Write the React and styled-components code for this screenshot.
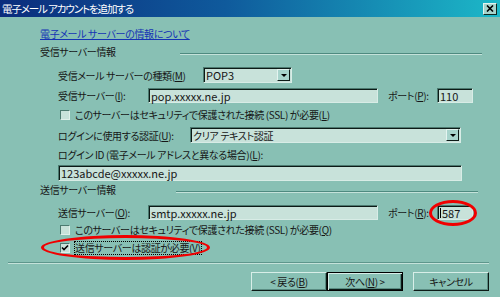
import styled, { createGlobalStyle } from "styled-components";

const GlobalStyle = createGlobalStyle`
  html, body {
    margin: 0;
    padding: 0;
    background: #88c0b4;
  }
`;

const Window = styled.div`
  width: 500px;
  height: 297px;
  overflow: hidden;
  background: #88c0b4;
  display: flex;
  flex-direction: column;
  font-family: "Noto Sans CJK JP", "Noto Sans", sans-serif;
  font-feature-settings: "palt";
  font-size: 10px;
  letter-spacing: -0.35px;
  color: #161616;
`;

const TitleBar = styled.div`
  height: 17px;
  flex-shrink: 0;
  display: flex;
  align-items: center;
  justify-content: space-between;
  padding: 0 3px 0 2px;
  background: linear-gradient(to right, #0b2c7c 0%, #0f5a9c 45%, #1cb8c8 100%);
  color: #fff;
  font-size: 10.5px;
  letter-spacing: -1.1px;
`;

const CloseButton = styled.div`
  width: 14px;
  height: 12px;
  box-sizing: border-box;
  display: flex;
  align-items: center;
  justify-content: center;
  background: #a8d4cc;
  border-top: 1px solid #e4f4f0;
  border-left: 1px solid #e4f4f0;
  border-right: 1px solid #102820;
  border-bottom: 1px solid #102820;
`;

const Body = styled.div`
  display: flex;
  flex-direction: column;
  padding: 9px 0 0 40px;
`;

const Row = styled.div`
  display: flex;
  align-items: center;
  height: ${(p) => p.$h || 14}px;
  margin-top: ${(p) => p.$mt || 0}px;
  padding-left: ${(p) => p.$indent || 0}px;
  white-space: nowrap;
`;

const Link = styled.a`
  color: #1434b4;
  text-decoration: underline;
`;

const Heading = styled(Row)`
  align-items: flex-start;
  line-height: 14px;
  padding-right: ${(p) => p.$pr}px;
`;

const Rule = styled.div`
  margin-left: auto;
  margin-top: 8px;
  width: 302px;
  height: 0;
  border-top: 1px solid #4e8a80;
  border-bottom: 1px solid #c4e2da;
`;

const Label = styled.span`
  display: inline-block;
  width: ${(p) => (p.$w ? `${p.$w}px` : "auto")};
  margin-left: ${(p) => p.$ml || 0}px;
  flex-shrink: 0;
`;

const U = styled.span`
  text-decoration: underline;
`;

const Field = styled.div`
  position: relative;
  width: ${(p) => p.$w}px;
  height: ${(p) => p.$h || 15}px;
  box-sizing: border-box;
  background: #c8e2da;
  border-top: 1px solid #4c7a70;
  border-left: 1px solid #4c7a70;
  border-right: 1px solid #d8ece6;
  border-bottom: 1px solid #d8ece6;
  box-shadow: inset 1px 1px 0 #0c1a16;
  padding-left: 2px;
  display: flex;
  align-items: center;
  flex-shrink: 0;
  font-size: ${(p) => (p.$jp ? 10 : 11)}px;
  letter-spacing: ${(p) => (p.$jp ? -0.35 : 0)}px;
`;

const Caret = styled.span`
  width: 1px;
  height: 10px;
  background: #000;
  margin-right: 1px;
`;

const DropButton = styled.div`
  margin-left: auto;
  width: 13px;
  height: 12px;
  box-sizing: border-box;
  background: #a8d4cc;
  border-top: 1px solid #e4f4f0;
  border-left: 1px solid #e4f4f0;
  border-right: 1px solid #0c1a16;
  border-bottom: 1px solid #0c1a16;
  display: flex;
  align-items: center;
  justify-content: center;
  margin-right: 1px;

  &::after {
    content: "";
    border-left: 3px solid transparent;
    border-right: 3px solid transparent;
    border-top: 3px solid #000;
  }
`;

const Box = styled.span`
  position: relative;
  width: 10px;
  height: 10px;
  box-sizing: border-box;
  background: #c8e2da;
  border-top: 1px solid #4c7a70;
  border-left: 1px solid #4c7a70;
  border-right: 1px solid #e0f0ea;
  border-bottom: 1px solid #e0f0ea;
  margin: 0 5px 0 2px;
  flex-shrink: 0;
  display: flex;
  align-items: center;
  justify-content: center;
`;

const Focus = styled.span`
  outline: 1px dotted #000;
  outline-offset: 0;
  line-height: 12px;
`;

const Ring = styled.span`
  position: absolute;
  left: ${(p) => p.$x}px;
  top: ${(p) => p.$y}px;
  width: ${(p) => p.$w}px;
  height: ${(p) => p.$h}px;
  box-sizing: border-box;
  border: 3px solid #f00000;
  border-radius: 50%;
  pointer-events: none;
`;

const Anchor = styled.div`
  position: relative;
  display: flex;
  align-items: center;
`;

const Footer = styled.div`
  display: flex;
  flex-direction: column;
  padding: 0 11px 0 8px;
  margin-top: 8px;
`;

const Separator = styled.div`
  height: 0;
  border-top: 1px solid #5e968c;
  border-bottom: 1px solid #c4e2da;
`;

const Buttons = styled.div`
  display: flex;
  justify-content: flex-end;
  margin-top: 8px;
`;

const Button = styled.div`
  width: 76px;
  height: 19px;
  box-sizing: border-box;
  display: flex;
  align-items: center;
  justify-content: center;
  background: #88c0b4;
  border-top: 1px solid #d8eee8;
  border-left: 1px solid #d8eee8;
  border-right: 1px solid #0c1a16;
  border-bottom: 1px solid #0c1a16;
  box-shadow: inset -1px -1px 0 #5a8c82;
  margin-left: ${(p) => p.$ml || 0}px;
  ${(p) =>
    p.$default &&
    `
    border: 1px solid #000;
    box-shadow: inset 1px 1px 0 #d8eee8, inset -1px -1px 0 #0c1a16, inset -2px -2px 0 #5a8c82;
  `}
`;

const CheckMark = () => (
  <svg width="8" height="8" viewBox="0 0 8 8">
    <path d="M1 3.5 L3 5.5 L7 1.5" stroke="#000" strokeWidth="1.6" fill="none" />
  </svg>
);

const Checkbox = ({ checked }) => <Box>{checked && <CheckMark />}</Box>;

export default function App() {
  return (
    <>
      <GlobalStyle />
      <Window>
        <TitleBar>
          <span>電子メール アカウントを追加する</span>
          <CloseButton>
            <svg width="8" height="7" viewBox="0 0 8 7">
              <path d="M1 0.5 L7 6.5 M7 0.5 L1 6.5" stroke="#000" strokeWidth="1.6" />
            </svg>
          </CloseButton>
        </TitleBar>
        <Body>
          <Row>
            <Link>電子メール サーバーの情報について</Link>
          </Row>

          <Heading $mt={5} $pr={18}>
            <span>受信サーバー情報</span>
            <Rule />
          </Heading>

          <Row $mt={8} $h={16} $indent={18}>
            <Label $w={145}>
              受信メール サーバーの種類(<U>M</U>)
            </Label>
            <Field $w={89} $h={16}>
              POP3
              <DropButton />
            </Field>
          </Row>

          <Row $mt={5} $h={15} $indent={18}>
            <Label $w={90}>
              受信サーバー(<U>I</U>):
            </Label>
            <Field $w={230}>pop.xxxxx.ne.jp</Field>
            <Label $ml={10} $w={49}>
              ポート(<U>P</U>):
            </Label>
            <Field $w={36}>110</Field>
          </Row>

          <Row $mt={5} $h={13} $indent={18}>
            <Checkbox />
            <span>
              このサーバーはセキュリティで保護された接続 (SSL) が必要(<U>L</U>)
            </span>
          </Row>

          <Row $mt={6} $h={16} $indent={18}>
            <Label $w={132}>
              ログインに使用する認証(<U>U</U>):
            </Label>
            <Field $w={271} $h={16} $jp>
              クリア テキスト認証
              <DropButton />
            </Field>
          </Row>

          <Row $mt={4} $indent={18}>
            ログイン ID (電子メール アドレスと異なる場合)(<U>L</U>):
          </Row>

          <Row $mt={4} $h={16} $indent={18}>
            <Field $w={404} $h={16}>
              123abcde@xxxxx.ne.jp
            </Field>
          </Row>

          <Heading $mt={2} $pr={22}>
            <span>送信サーバー情報</span>
            <Rule />
          </Heading>

          <Row $mt={8} $h={15} $indent={18}>
            <Label $w={90}>
              送信サーバー(<U>O</U>):
            </Label>
            <Field $w={230}>smtp.xxxxx.ne.jp</Field>
            <Label $ml={10} $w={49}>
              ポート(<U>R</U>):
            </Label>
            <Anchor>
              <Field $w={36}>
                <Caret />
                587
              </Field>
              <Ring $x={-8} $y={-5} $w={48} $h={26} />
            </Anchor>
          </Row>

          <Row $mt={3} $h={13} $indent={18}>
            <Checkbox />
            <span>
              このサーバーはセキュリティで保護された接続 (SSL) が必要(<U>Q</U>)
            </span>
          </Row>

          <Row $mt={5} $h={13} $indent={18}>
            <Anchor>
              <Checkbox checked />
              <Focus>
                送信サーバーは認証が必要(<U>V</U>)
              </Focus>
              <Ring $x={-17} $y={-7} $w={169} $h={25} />
            </Anchor>
          </Row>
        </Body>

        <Footer>
          <Separator />
          <Buttons>
            <Button>
              &lt; 戻る(<U>B</U>)
            </Button>
            <Button $default>
              次へ(<U>N</U>) &gt;
            </Button>
            <Button $ml={10}>キャンセル</Button>
          </Buttons>
        </Footer>
      </Window>
    </>
  );
}
